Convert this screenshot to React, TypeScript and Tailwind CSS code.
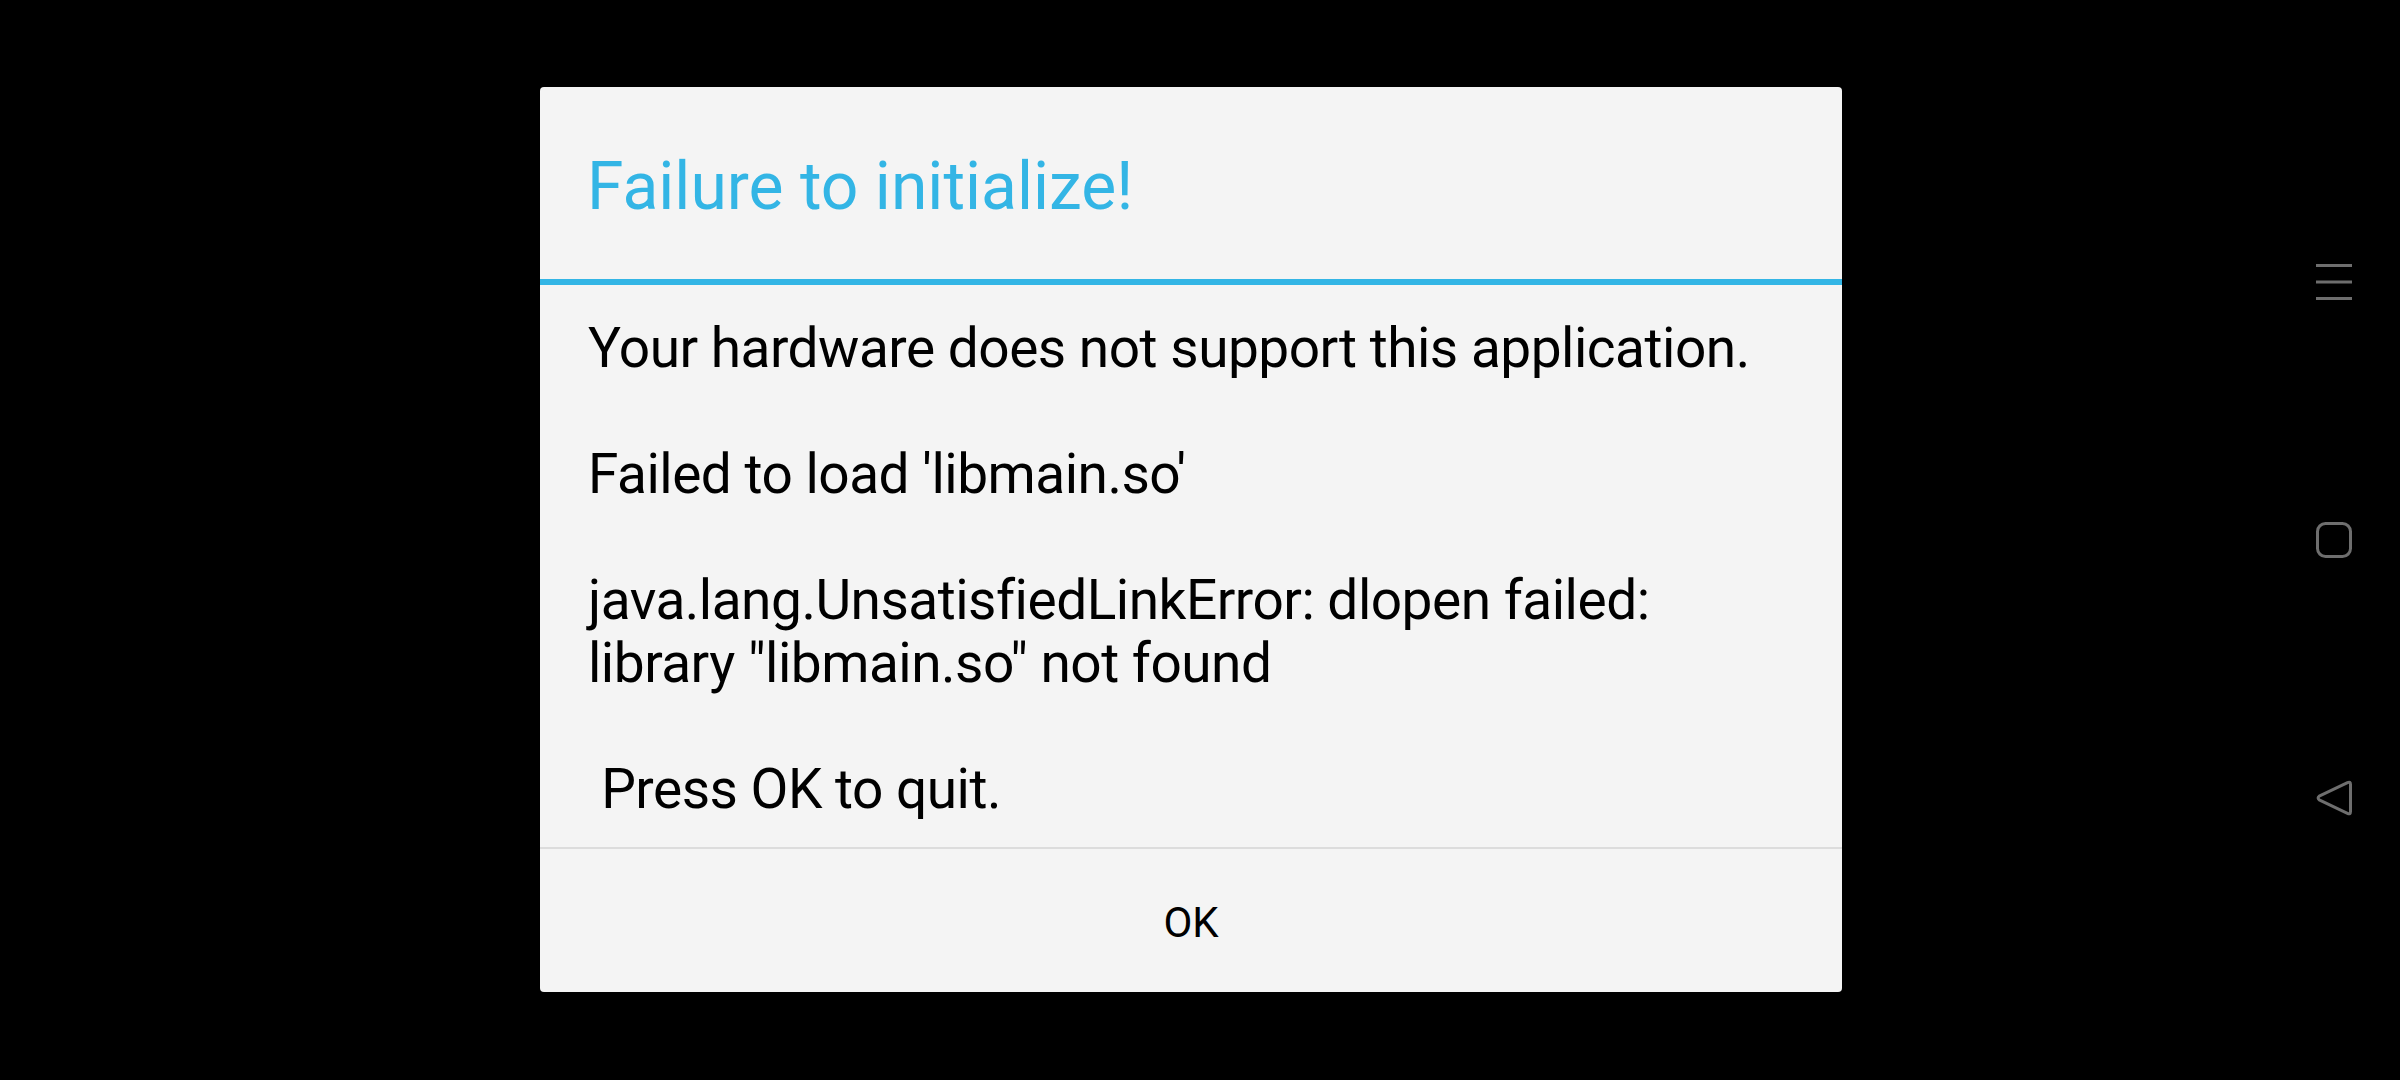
import React from 'react';

const body = `Your hardware does not support this application.

Failed to load 'libmain.so'

java.lang.UnsatisfiedLinkError: dlopen failed:
library "libmain.so" not found

 Press OK to quit.`;

function NavButtons() {
  return (
    <div className="flex w-[132px] flex-col items-center pt-[262px] gap-[218px]">
      {/* recents */}
      <div className="flex h-[40px] w-[40px] items-center justify-center">
        <svg width="36" height="36" viewBox="0 0 36 36" fill="none" stroke="#6e6e6e" strokeWidth="3">
          <line x1="0" y1="1.5" x2="36" y2="1.5" />
          <line x1="0" y1="18" x2="36" y2="18" />
          <line x1="0" y1="34.5" x2="36" y2="34.5" />
        </svg>
      </div>
      {/* home */}
      <div className="flex h-[40px] w-[40px] items-center justify-center">
        <svg width="36" height="36" viewBox="0 0 36 36" fill="none" stroke="#6e6e6e" strokeWidth="3">
          <rect x="1.5" y="1.5" width="33" height="33" rx="8" />
        </svg>
      </div>
      {/* back */}
      <div className="flex h-[40px] w-[40px] items-center justify-center">
        <svg width="36" height="36" viewBox="0 0 36 36" fill="none" stroke="#6e6e6e" strokeWidth="3" strokeLinejoin="round">
          <path d="M31.5 2.6 Q34.5 1.2 34.5 4.5 L34.5 31.5 Q34.5 34.8 31.5 33.4 L3.2 19.8 Q1 18 3.2 16.2 Z" />
        </svg>
      </div>
    </div>
  );
}

export default function App() {
  return (
    <main className="flex min-h-screen w-full bg-black" style={{ fontFamily: 'Roboto, "Noto Sans", sans-serif' }}>
      <div className="flex-1 pl-[540px] pt-[87px]">
        <div className="flex h-[905px] w-[1302px] flex-col overflow-hidden rounded-[4px] bg-[#f4f4f4]">
          <div className="h-[192px] px-[47px] pt-[61px]">
            <h1 className="text-[66px] leading-[78px] text-[#33b5e5]">Failure to initialize!</h1>
          </div>
          <div className="h-[6px] bg-[#33b5e5]" />
          <div className="flex-1 px-[48px] pt-[32px]">
            <p className="whitespace-pre-wrap text-[55px] leading-[63px] tracking-[-0.5px] text-black">{body}</p>
          </div>
          <div className="h-[2px] bg-[#dcdcdc]" />
          <button className="flex h-[143px] items-center justify-center pt-[4px] text-[42px] text-black">OK</button>
        </div>
      </div>
      <NavButtons />
    </main>
  );
}
